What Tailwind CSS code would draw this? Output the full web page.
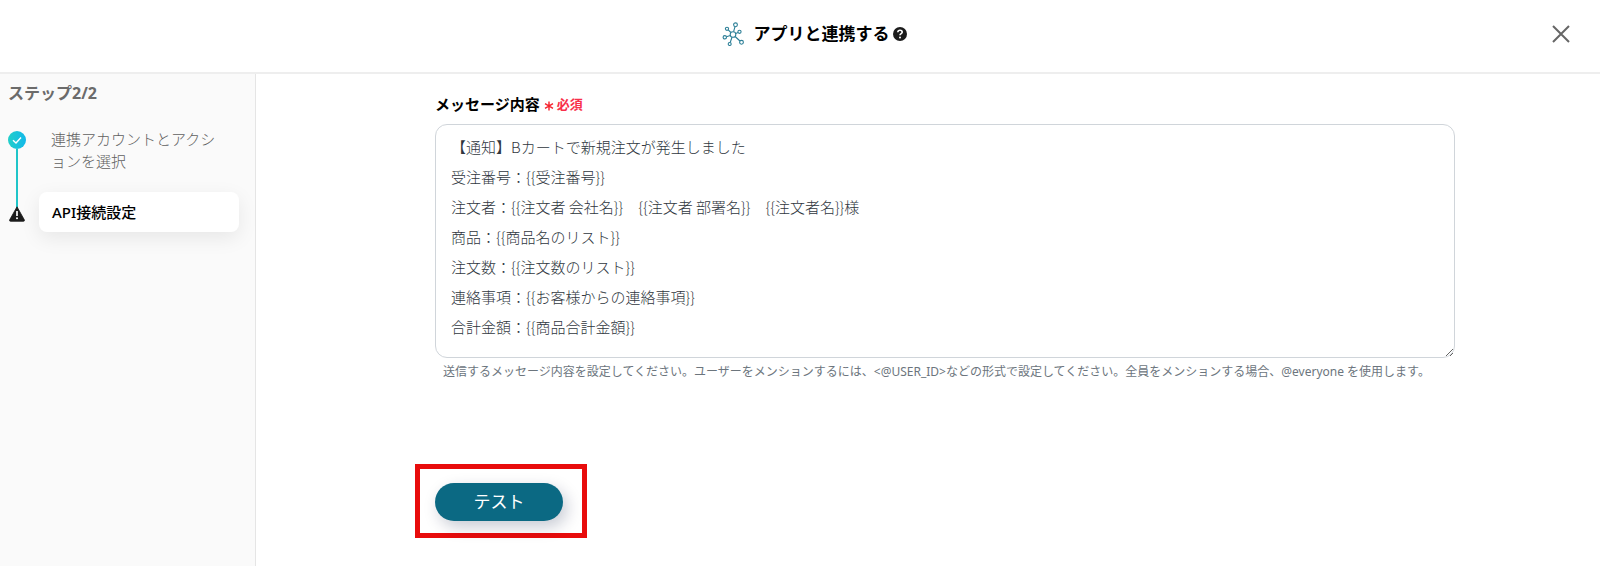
<!DOCTYPE html>
<html lang="ja">

<head>
    <meta charset="UTF-8" />
    <meta name="viewport" content="width=device-width, initial-scale=1.0" />
    <title>アプリと連携する</title>
    <script src="https://cdn.jsdelivr.net/npm/@tailwindcss/browser@4"></script>
</head>

<body class="flex min-h-screen flex-col bg-white font-['Noto_Sans','Noto_Sans_CJK_JP',sans-serif] text-[15px] text-black">

    <!-- ヘッダー -->
    <header class="grid h-[74px] grid-cols-[1fr_auto_1fr] items-center border-b-2 border-[#eeeeee] px-[22px] pb-1">
        <div></div>
        <div class="flex items-center pl-7">
            <svg class="mr-2 h-6 w-6" viewBox="0 0 24 24" fill="none" stroke="#2c7f97" stroke-width="1.1">
                <circle cx="11" cy="12.500" r="2.800" />
                <circle cx="13.500" cy="2.800" r="1.900" />
                <circle cx="5" cy="6.800" r="1.600" />
                <circle cx="17.500" cy="9.800" r="1.600" />
                <circle cx="2.800" cy="15.300" r="1.700" />
                <circle cx="7.700" cy="22" r="1.500" />
                <circle cx="19.500" cy="20.300" r="1.900" />
                <path d="M11.600 9.700 13 4.700M6.200 7.900l2.700 2.600M16 10.400l-2.200 1M4.500 14.800l3.800-1.400M8.200 20.500l1.800-5.300M18 19l-4.900-4.500" />
            </svg>
            <h1 class="text-[17px] leading-6 font-bold">アプリと連携する</h1>
            <button type="button" aria-label="ヘルプ" class="ml-[3px]">
                <svg class="h-[14px] w-[14px]" viewBox="0 0 14 14" fill="none">
                    <circle cx="7" cy="7" r="7" fill="#1c1c1c" />
                    <path d="M4.8 5.3c.1-1.3 1-2 2.2-2s2.2.7 2.2 1.9C9.200 6.700 7 6.600 7 8.300" stroke="#fff" stroke-width="1.600" />
                    <circle cx="7" cy="10.400" r="1" fill="#fff" />
                </svg>
            </button>
        </div>
        <button type="button" aria-label="閉じる" class="justify-self-end p-2">
            <svg class="h-[18px] w-[18px]" viewBox="0 0 18 18" fill="none" stroke="#666666" stroke-width="2">
                <path d="M1 1l16 16M17 1 1 17" />
            </svg>
        </button>
    </header>

    <div class="flex flex-1">
        <!-- ステップ一覧 -->
        <aside class="w-64 shrink-0 border-r border-[#e5e5e5] bg-[#fafafa] px-2 pt-2">
            <p class="text-[16px] leading-[22px] font-bold text-[#6b6b6b]">ステップ2/2</p>
            <ol class="mt-6">
                <li class="flex">
                    <div class="flex w-[18px] shrink-0 flex-col items-center pt-[3px]">
                        <svg class="h-[18px] w-[18px] shrink-0" viewBox="0 0 18 18" fill="none">
                            <defs>
                                <linearGradient id="done" x1="0" y1="0" x2="1" y2="0">
                                    <stop offset="0" stop-color="#22cfc9" />
                                    <stop offset="1" stop-color="#12b8ea" />
                                </linearGradient>
                            </defs>
                            <circle cx="9" cy="9" r="9" fill="url(#done)" />
                            <path d="M5 9.200 8 12l5-5.500" stroke="#fff" stroke-width="1.400" />
                        </svg>
                        <div class="w-[2px] flex-1 bg-[#1fc5c9]"></div>
                    </div>
                    <a href="#" class="mr-6 mb-5 ml-[25px] leading-[22px] font-light break-all text-[#606060]">連携アカウントとアクションを選択</a>
                </li>
                <li class="flex">
                    <div class="flex w-[18px] shrink-0 flex-col items-center">
                        <div class="h-4 w-[2px] bg-[#1fc5c9]"></div>
                        <svg class="-mt-[2px] h-[16px] w-[16px]" viewBox="0 0 16 16">
                            <path d="M8 .8 15.300 13.800Q15.800 15.300 14.500 15.300H1.500Q.2 15.300.7 13.800Z" fill="#1c1c1c" stroke="#1c1c1c" stroke-width=".8" stroke-linejoin="round" />
                            <path d="M8 5v5" stroke="#fff" stroke-width="1.700" />
                            <circle cx="8" cy="12.300" r="1" fill="#fff" />
                        </svg>
                    </div>
                    <a href="#" aria-current="step" class="mr-2 ml-[13px] flex-1 rounded-lg bg-white px-[13px] py-[9px] leading-[22px] font-medium shadow-[0_6px_20px_rgba(0,0,0,0.08)]">API接続設定</a>
                </li>
            </ol>
        </aside>

        <!-- メッセージ設定フォーム -->
        <main class="flex-1 pt-[19px] pr-[145px] pb-6 pl-[179px]">
            <form>
                <div class="flex items-center leading-[22px]">
                    <label for="message" class="font-bold">メッセージ内容</label>
                    <svg class="mt-1 ml-1 h-[10px] w-[10px]" viewBox="0 0 10 10" stroke="#f5222d" stroke-width="1.400">
                        <path d="M5 .5v9M1 2.700l8 4.600M9 2.700 1 7.300" />
                    </svg>
                    <span class="ml-[3px] text-[13px] font-bold text-[#f8304a]">必須</span>
                </div>
                <textarea id="message" rows="7" class="mt-[9px] block h-[234px] w-full resize-y rounded-xl border border-[#d0d5da] px-[15px] py-[7px] font-['Noto_Sans_CJK_JP',sans-serif] leading-[30px] font-light text-[#30373e]">【通知】Bカートで新規注文が発生しました
受注番号：{{受注番号}}
注文者：{{注文者 会社名}}　{{注文者 部署名}}　{{注文者名}}様
商品：{{商品名のリスト}}
注文数：{{注文数のリスト}}
連絡事項：{{お客様からの連絡事項}}
合計金額：{{商品合計金額}}</textarea>
                <p class="mt-1 ml-2 text-[12px] leading-5 text-[#6c757d]">送信するメッセージ内容を設定してください。ユーザーをメンションするには、&lt;@USER_ID&gt;などの形式で設定してください。全員をメンションする場合、@everyone を使用します。</p>

                <!-- テスト実行（赤枠で強調） -->
                <div class="mt-[82px] -ml-5 w-[172px] border-[5px] border-[#e80c0c] px-[15px] pt-[14px] pb-3">
                    <button type="submit" class="block h-[38px] w-32 rounded-full bg-[#0b6983] text-[17px] text-white shadow-[4px_6px_16px_rgba(0,20,60,0.22)]">テスト</button>
                </div>
            </form>
        </main>
    </div>

</body>

</html>
